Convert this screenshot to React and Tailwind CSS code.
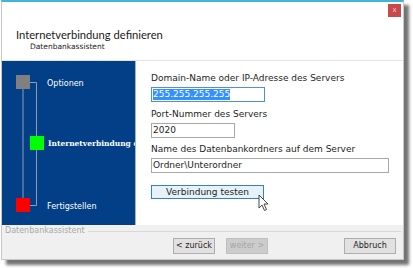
import React from 'react'

const ui = { fontFamily: '"DejaVu Sans", Verdana, sans-serif' }

function Steps() {
  return (
    <div className="relative w-[133px] shrink-0 bg-[#033f86] overflow-hidden">
      <svg className="absolute left-0 top-0" width="133" height="164">
        <path d="M21 28 V137" stroke="#8c9cb8" strokeWidth="1" fill="none" />
        <path d="M28 21.5 H34.5 V144.5 H28" stroke="#8c9cb8" strokeWidth="1" fill="none" />
        <rect x="14" y="14" width="14" height="14" fill="#808080" />
        <rect x="28" y="75" width="14" height="14" fill="#00ff00" />
        <rect x="14" y="137" width="14" height="14" fill="#ff0000" />
      </svg>
      <span className="absolute left-[45px] top-[17px] text-[8px] text-white whitespace-nowrap">Optionen</span>
      <span
        className="absolute left-[46px] top-[77px] text-[7.5px] font-bold text-white whitespace-nowrap"
        style={{ fontFamily: '"DejaVu Serif", serif' }}
      >
        Internetverbindung definieren
      </span>
      <span className="absolute left-[45px] top-[140px] text-[8px] text-white whitespace-nowrap">Fertigstellen</span>
    </div>
  )
}

function Field({ label, value, w, selected, focus }) {
  return (
    <div className="flex flex-col">
      <span className="text-[9px] leading-[11px] text-[#1e1e1e] whitespace-nowrap">{label}</span>
      <div
        className={`mt-[3px] h-[15px] ${w} border ${focus ? 'border-[#4f8fd6]' : 'border-[#a8a8a8]'} bg-white flex items-center px-[1px]`}
      >
        <span
          className={`text-[9px] leading-[11px] whitespace-nowrap ${selected ? 'bg-[#3390ff] text-white' : 'text-[#1e1e1e]'}`}
        >
          {value}
        </span>
      </div>
    </div>
  )
}

export default function App() {
  return (
    <div className="relative w-[413px] h-[268px] bg-white overflow-hidden" style={ui}>
      <div className="ml-[1px] w-[403px] h-[260px] flex flex-col bg-white border-x border-b border-[#c8c8c8] border-t-2 border-t-[#41b4da] shadow-[5px_5px_3px_rgba(0,0,0,0.55)]">
        {/* header */}
        <div className="relative h-[59px] shrink-0 border-b border-[#e3e3e3]">
          <div
            className="absolute left-[14px] top-[26px] text-[11.2px] leading-[13px] text-[#1a1a1a] whitespace-nowrap"
            style={{ fontFamily: 'Lato, sans-serif' }}
          >
            Internetverbindung definieren
          </div>
          <div className="absolute left-[28px] top-[40px] text-[7.5px] leading-[9px] text-[#222] whitespace-nowrap">
            Datenbankassistent
          </div>
          <div className="absolute right-[2px] top-[2px] w-[13px] h-[13px] bg-[#c9484b] flex items-center justify-center">
            <span className="text-[7px] leading-none text-[#f3cccc]">x</span>
          </div>
        </div>

        {/* body */}
        <div className="flex h-[164px] shrink-0">
          <Steps />
          <div className="w-[1px] bg-[#9fb4cf]" />
          <div className="flex-1 flex flex-col pl-[15px] pt-[12px]">
            <Field label="Domain-Name oder IP-Adresse des Servers" value="255.255.255.255" w="w-[114px]" selected focus />
            <div className="mt-[7px]">
              <Field label="Port-Nummer des Servers" value="2020" w="w-[84px]" />
            </div>
            <div className="mt-[6px]">
              <Field label="Name des Datenbankordners auf dem Server" value="Ordner\Unterordner" w="w-[238px]" />
            </div>
            <div className="relative mt-[12px] w-[113px] h-[14px] border border-[#3c7fb1] bg-[#e5f1fb] flex items-center justify-center">
              <span className="text-[9px] leading-none text-[#1e1e1e]">Verbindung testen</span>
              <svg className="absolute left-[106px] top-[8px]" width="12" height="18" viewBox="0 0 12 18">
                <path d="M1 1 V14 L4 11 L6.5 16.5 L8.5 15.5 L6 10 H10 Z" fill="#fff" stroke="#333" strokeWidth="0.9" strokeLinejoin="round" />
              </svg>
            </div>
          </div>
        </div>

        {/* footer */}
        <div className="flex-1 bg-[#f0f0f0] flex flex-col">
          <div className="flex items-center h-[12px] pl-[3px] pr-[2px]">
            <span className="text-[8px] leading-none text-[#a8a8a8] whitespace-nowrap">Datenbankassistent</span>
            <div className="flex-1 h-[1px] ml-[3px] bg-[#d8d8d8]" />
          </div>
          <div className="flex items-center mt-[1px] pl-[171px]">
            <div className="w-[42px] h-[16px] border border-[#adadad] bg-[#e1e1e1] flex items-center justify-center text-[8px] text-[#1e1e1e]">
              &lt; zurück
            </div>
            <div className="ml-[11px] w-[42px] h-[16px] border border-[#bfbfbf] bg-[#cccccc] flex items-center justify-center text-[8px] text-[#a5a5a5]">
              weiter &gt;
            </div>
            <div className="ml-[76px] w-[52px] h-[16px] border border-[#adadad] bg-[#e1e1e1] flex items-center justify-center text-[8px] text-[#1e1e1e]">
              Abbruch
            </div>
          </div>
        </div>
      </div>
    </div>
  )
}
